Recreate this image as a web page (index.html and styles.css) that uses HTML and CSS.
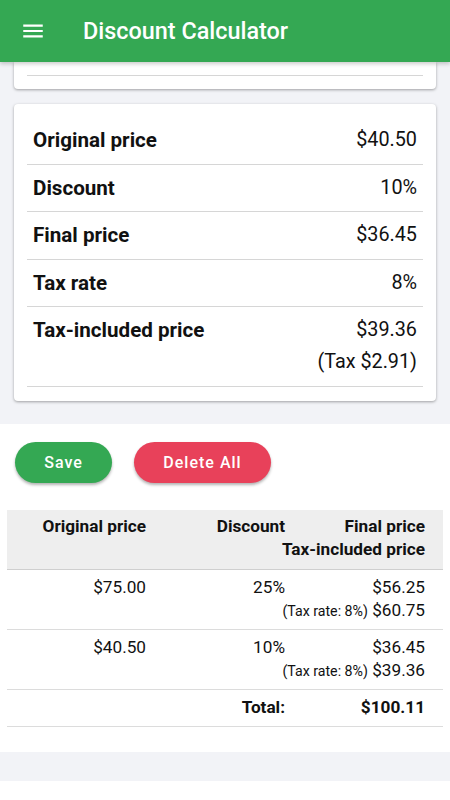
FILE: index.html
```html
<!DOCTYPE html>
<html lang="en">
<head>
  <meta charset="UTF-8" />
  <meta name="viewport" content="width=device-width, initial-scale=1.0"/>
  <title>Discount Calculator</title>
  <link rel="stylesheet" href="styles.css">
</head>
<body>
  <header class="app-bar">
    <svg class="menu-icon" viewBox="0 0 24 24" width="24" height="24">
      <path d="M3 6h18v2H3zM3 11h18v2H3zM3 16h18v2H3z" fill="#fff"/>
    </svg>
    <h1>Discount Calculator</h1>
  </header>

  <main>
    <section class="top-area">
      <div class="card card-cut">
        <div class="card-line"></div>
      </div>

      <div class="card result-card">
        <div class="result-row">
          <span class="label">Original price</span>
          <span class="value">$40.50</span>
        </div>
        <div class="result-row">
          <span class="label">Discount</span>
          <span class="value">10%</span>
        </div>
        <div class="result-row">
          <span class="label">Final price</span>
          <span class="value">$36.45</span>
        </div>
        <div class="result-row">
          <span class="label">Tax rate</span>
          <span class="value">8%</span>
        </div>
        <div class="result-row tall">
          <span class="label">Tax-included price</span>
          <span class="value">$39.36<br>(Tax $2.91)</span>
        </div>
      </div>
    </section>

    <section class="history">
      <div class="buttons">
        <button class="btn save-btn">Save</button>
        <button class="btn delete-btn">Delete All</button>
      </div>

      <div class="table">
        <div class="t-row t-head">
          <div class="cell">Original price</div>
          <div class="cell">Discount</div>
          <div class="cell">Final price<br>Tax-included price</div>
        </div>
        <div class="t-row">
          <div class="cell">$75.00</div>
          <div class="cell">25%</div>
          <div class="cell">$56.25<br><small>(Tax rate: 8%)</small> $60.75</div>
        </div>
        <div class="t-row">
          <div class="cell">$40.50</div>
          <div class="cell">10%</div>
          <div class="cell">$36.45<br><small>(Tax rate: 8%)</small> $39.36</div>
        </div>
        <div class="t-row t-total">
          <div class="cell"></div>
          <div class="cell">Total:</div>
          <div class="cell">$100.11</div>
        </div>
      </div>
    </section>

    <div class="gap-band"></div>
  </main>
</body>
</html>
```

FILE: styles.css
```css
:root {
  --green: #34a853;
  --red: #e8415a;
  --page-bg: #f2f3f7;
  --line: #d6d6d6;
  --text: #111;
}

* {
  box-sizing: border-box;
}

body {
  margin: 0;
  font-family: Roboto, "Noto Sans", sans-serif;
  background: #fff;
  color: var(--text);
  height: 800px;
  overflow: hidden;
}

.app-bar {
  position: relative;
  z-index: 2;
  height: 62px;
  background: var(--green);
  display: flex;
  align-items: center;
  padding: 0 0 0 20px;
  box-shadow: 0 2px 4px rgba(0, 0, 0, 0.2);
}

.menu-icon {
  width: 26px;
  height: 26px;
}

.app-bar h1 {
  margin: 0 0 0 37px;
  color: #fff;
  font-size: 23.4px;
  font-weight: 500;
}

.top-area {
  background: var(--page-bg);
  padding: 0 14px 23px;
}

.card {
  background: #fff;
  border-radius: 4px;
  box-shadow: 0 1px 3px rgba(0, 0, 0, 0.35);
  padding: 0 13px;
}

.card-cut {
  height: 27px;
  border-radius: 0 0 4px 4px;
  padding-top: 13px;
  margin-bottom: 15px;
}

.card-line {
  border-bottom: 1px solid var(--line);
}

.result-card {
  padding: 13px 13px 14px;
}

.result-row {
  display: flex;
  justify-content: space-between;
  align-items: flex-start;
  height: 47.6px;
  padding: 10px 6px 0;
  border-bottom: 1px solid var(--line);
  font-size: 19.8px;
  line-height: 26px;
}

.result-row.tall {
  height: 80px;
  line-height: 32px;
  padding-top: 7px;
}

.label {
  font-weight: 700;
  font-size: 20.6px;
}

.value {
  text-align: right;
}

.history {
  background: #fff;
  padding: 18px 7px 25px;
}

.buttons {
  display: flex;
  gap: 22px;
  padding-left: 8px;
  margin-bottom: 27px;
}

.btn {
  height: 41px;
  border: none;
  border-radius: 21px;
  color: #fff;
  font-family: Roboto, sans-serif;
  font-size: 16px;
  font-weight: 500;
  letter-spacing: 1px;
  box-shadow: 0 2px 3px rgba(0, 0, 0, 0.3);
}

.save-btn {
  width: 97px;
  background: var(--green);
}

.delete-btn {
  width: 137px;
  background: var(--red);
}

.table {
  font-size: 17.2px;
}

.t-row {
  display: grid;
  grid-template-columns: 139px 139px 1fr;
  border-bottom: 1px solid #dcdcdc;
  padding: 6px 18px 6px 0;
  line-height: 23px;
}

.t-row .cell {
  text-align: right;
  white-space: nowrap;
}

.t-row .cell:last-child {
  margin-left: -40px;
}

.t-head {
  background: #eeeeee;
  font-weight: 700;
  border-bottom-color: #cfcfcf;
  padding-top: 5px;
  padding-bottom: 8px;
}

.t-row small {
  font-size: 14.2px;
}

.t-total {
  font-weight: 700;
  padding-bottom: 7px;
}

.gap-band {
  height: 29px;
  background: var(--page-bg);
}
```
